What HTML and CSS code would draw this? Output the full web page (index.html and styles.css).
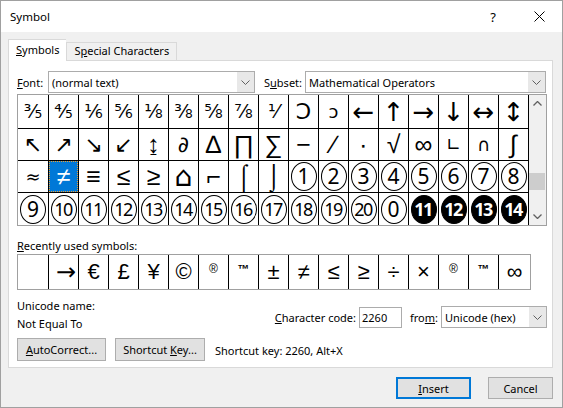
FILE: index.html
```html
<!DOCTYPE html>
<html lang="en">
<head>
  <meta charset="UTF-8">
  <meta name="viewport" content="width=device-width, initial-scale=1.0">
  <title>Symbol</title>
  <link rel="stylesheet" href="styles.css">
</head>
<body>
  <div class="window">
    <div class="titlebar">
      <span class="title">Symbol</span>
      <span class="caption-btn help">?</span>
      <span class="caption-btn">
        <svg width="11" height="11" viewBox="0 0 11 11"><path d="M0.5 0.5 L10.5 10.5 M10.5 0.5 L0.5 10.5" stroke="#000" stroke-width="1" fill="none"/></svg>
      </span>
    </div>

    <div class="tabs">
      <div class="tab active"><u>S</u>ymbols</div>
      <div class="tab">S<u>p</u>ecial Characters</div>
    </div>

    <div class="panel">
      <div class="font-row">
        <span class="lbl font-lbl"><u>F</u>ont:</span>
        <div class="combo font-combo">
          <span class="combo-text">(normal text)</span>
          <span class="drop"><svg width="9" height="5" viewBox="0 0 9 5"><path d="M0.5 0.5 L4.5 4.5 L8.5 0.5" stroke="#606060" fill="none"/></svg></span>
        </div>
        <span class="lbl subset-lbl">S<u>u</u>bset:</span>
        <div class="combo subset-combo">
          <span class="combo-text">Mathematical Operators</span>
          <span class="drop"><svg width="9" height="5" viewBox="0 0 9 5"><path d="M0.5 0.5 L4.5 4.5 L8.5 0.5" stroke="#606060" fill="none"/></svg></span>
        </div>
      </div>

      <div class="charmap">
        <div class="cells">
          <div class="cell frac">⅗</div>
          <div class="cell frac">⅘</div>
          <div class="cell frac">⅙</div>
          <div class="cell frac">⅚</div>
          <div class="cell frac">⅛</div>
          <div class="cell frac">⅜</div>
          <div class="cell frac">⅝</div>
          <div class="cell frac">⅞</div>
          <div class="cell frac">⅟</div>
          <div class="cell">Ↄ</div>
          <div class="cell small">ↄ</div>
          <div class="cell arrow">←</div>
          <div class="cell arrow">↑</div>
          <div class="cell arrow">→</div>
          <div class="cell arrow">↓</div>
          <div class="cell arrow">↔</div>
          <div class="cell arrow">↕</div>

          <div class="cell">↖</div>
          <div class="cell">↗</div>
          <div class="cell">↘</div>
          <div class="cell">↙</div>
          <div class="cell math">↨</div>
          <div class="cell">∂</div>
          <div class="cell math">∆</div>
          <div class="cell math">∏</div>
          <div class="cell math">∑</div>
          <div class="cell math">−</div>
          <div class="cell math">∕</div>
          <div class="cell math">∙</div>
          <div class="cell math">√</div>
          <div class="cell math">∞</div>
          <div class="cell small">∟</div>
          <div class="cell small">∩</div>
          <div class="cell math">∫</div>

          <div class="cell small">≈</div>
          <div class="cell selected">≠</div>
          <div class="cell math">≡</div>
          <div class="cell math">≤</div>
          <div class="cell math">≥</div>
          <div class="cell house">⌂</div>
          <div class="cell math">⌐</div>
          <div class="cell tall">⌠</div>
          <div class="cell tall">⌡</div>
          <div class="cell"><span class="circ">1</span></div>
          <div class="cell"><span class="circ">2</span></div>
          <div class="cell"><span class="circ">3</span></div>
          <div class="cell"><span class="circ">4</span></div>
          <div class="cell"><span class="circ">5</span></div>
          <div class="cell"><span class="circ">6</span></div>
          <div class="cell"><span class="circ">7</span></div>
          <div class="cell"><span class="circ">8</span></div>

          <div class="cell"><span class="circ">9</span></div>
          <div class="cell"><span class="circ two">10</span></div>
          <div class="cell"><span class="circ two">11</span></div>
          <div class="cell"><span class="circ two">12</span></div>
          <div class="cell"><span class="circ two">13</span></div>
          <div class="cell"><span class="circ two">14</span></div>
          <div class="cell"><span class="circ two">15</span></div>
          <div class="cell"><span class="circ two">16</span></div>
          <div class="cell"><span class="circ two">17</span></div>
          <div class="cell"><span class="circ two">18</span></div>
          <div class="cell"><span class="circ two">19</span></div>
          <div class="cell"><span class="circ two">20</span></div>
          <div class="cell"><span class="circ">0</span></div>
          <div class="cell"><span class="circ two neg">11</span></div>
          <div class="cell"><span class="circ two neg">12</span></div>
          <div class="cell"><span class="circ two neg">13</span></div>
          <div class="cell"><span class="circ two neg">14</span></div>
        </div>
        <div class="scrollbar">
          <div class="sb-btn"><svg width="9" height="5" viewBox="0 0 9 5"><path d="M0.5 4.5 L4.5 0.5 L8.5 4.5" stroke="#606060" stroke-width="1.3" fill="none"/></svg></div>
          <div class="sb-track"><div class="sb-thumb"></div></div>
          <div class="sb-btn"><svg width="9" height="5" viewBox="0 0 9 5"><path d="M0.5 0.5 L4.5 4.5 L8.5 0.5" stroke="#606060" stroke-width="1.3" fill="none"/></svg></div>
        </div>
      </div>

      <div class="recent-lbl"><u>R</u>ecently used symbols:</div>
      <div class="recent">
        <div class="rcell"></div>
        <div class="rcell long">→</div>
        <div class="rcell">€</div>
        <div class="rcell">£</div>
        <div class="rcell">¥</div>
        <div class="rcell">©</div>
        <div class="rcell sup">®</div>
        <div class="rcell sup tm">™</div>
        <div class="rcell">±</div>
        <div class="rcell">≠</div>
        <div class="rcell">≤</div>
        <div class="rcell">≥</div>
        <div class="rcell">÷</div>
        <div class="rcell">×</div>
        <div class="rcell sup">®</div>
        <div class="rcell sup tm">™</div>
        <div class="rcell">∞</div>
      </div>

      <div class="info">
        <div class="uname">
          <div>Unicode name:</div>
          <div>Not Equal To</div>
        </div>
        <div class="code-row">
          <span class="lbl"><u>C</u>haracter code:</span>
          <div class="field code-field">2260</div>
          <span class="lbl from-lbl">fro<u>m</u>:</span>
          <div class="combo from-combo">
            <span class="combo-text">Unicode (hex)</span>
            <span class="drop"><svg width="9" height="5" viewBox="0 0 9 5"><path d="M0.5 0.5 L4.5 4.5 L8.5 0.5" stroke="#606060" fill="none"/></svg></span>
          </div>
        </div>
      </div>

      <div class="btn-row">
        <button class="btn autocorrect"><u>A</u>utoCorrect...</button>
        <button class="btn shortcut">Shortcut <u>K</u>ey...</button>
        <span class="shortcut-text">Shortcut key: 2260, Alt+X</span>
      </div>
    </div>

    <div class="actions">
      <button class="btn insert"><u>I</u>nsert</button>
      <button class="btn cancel">Cancel</button>
    </div>
  </div>
</body>
</html>
```

FILE: styles.css
```css
* {
  box-sizing: border-box;
}

body {
  margin: 0;
  font-family: 'Noto Sans', 'Open Sans', sans-serif;
  font-size: 11px;
  color: #000;
}

.window {
  width: 563px;
  height: 408px;
  border: 1px solid #a0a0a0;
  background: #f0f0f0;
  display: flex;
  flex-direction: column;
}

/* title bar */
.titlebar {
  height: 31px;
  background: #fff;
  display: flex;
  align-items: center;
  padding-left: 9px;
}

.title {
  flex: 1;
  font-size: 11.5px;
}

.caption-btn {
  width: 46px;
  height: 31px;
  display: flex;
  align-items: center;
  justify-content: center;
}

.help {
  font-size: 13px;
}

/* tabs */
.tabs {
  display: flex;
  align-items: flex-end;
  margin-top: 6px;
  padding-left: 7px;
  height: 22px;
}

.tab {
  height: 18px;
  padding: 0 7px;
  border: 1px solid #d9d9d9;
  border-bottom: none;
  background: #f0f0f0;
  line-height: 16px;
}

.tab.active {
  height: 22px;
  background: #fff;
  padding-top: 2px;
  margin-bottom: -1px;
  position: relative;
  z-index: 1;
  border-right: none;
}

/* tab page */
.panel {
  height: 308px;
  margin: 0 9px 0 7px;
  border: 1px solid #d9d9d9;
  background: #fff;
  padding: 10px 0 0 8px;
}

.font-row {
  display: flex;
  align-items: center;
  height: 22px;
  margin-bottom: 1px;
}

.lbl {
  white-space: nowrap;
}

.font-lbl {
  width: 31px;
}

.subset-lbl {
  width: 41px;
  margin-left: 9px;
}

.combo {
  height: 22px;
  border: 1px solid #acacac;
  display: flex;
  align-items: center;
  background: #fff;
}

.combo-text {
  flex: 1;
  padding-left: 3px;
  white-space: nowrap;
}

.drop {
  width: 17px;
  height: 100%;
  background: #e8e8e8;
  display: flex;
  align-items: center;
  justify-content: center;
}

.font-combo {
  width: 207px;
}

.subset-combo {
  width: 241px;
}

/* character grid */
.charmap {
  display: flex;
  width: 530px;
  border: 1px solid #a0a0a0;
}

.cells {
  display: grid;
  grid-template-columns: 30px repeat(16, 29px);
  grid-template-rows: 33px 31px 31px 32px;
  gap: 1px;
  background: #000;
  border-right: 1px solid #000;
  font-family: 'DejaVu Sans', sans-serif;
}

.cell {
  background: #fff;
  display: flex;
  align-items: center;
  justify-content: center;
  font-size: 22px;
  line-height: 1;
  overflow: hidden;
}

.cell.frac {
  font-size: 19px;
}

.cell.arrow {
  font-size: 26px;
}

.cell.math {
  font-family: 'Liberation Sans', 'DejaVu Sans', sans-serif;
  font-size: 25px;
}

.cell.small {
  font-size: 18px;
}

.cell.house {
  font-size: 28px;
}

.cell.tall {
  font-family: 'Liberation Sans', 'DejaVu Sans', sans-serif;
  font-size: 25px;
}

.cell.selected {
  background: #0078d7;
  color: #fff;
  border: 1px dotted #f0a030;
  font-family: 'Liberation Sans', 'DejaVu Sans', sans-serif;
  font-size: 25px;
}

.circ {
  width: 26px;
  height: 29px;
  border: 1.5px solid #000;
  border-radius: 50%;
  display: flex;
  align-items: center;
  justify-content: center;
  font-family: 'Noto Sans', sans-serif;
  font-size: 21px;
}

.circ.two {
  font-size: 18px;
  letter-spacing: -1.5px;
  padding-right: 1px;
}

.circ.neg {
  background: #000;
  color: #fff;
  font-weight: bold;
}

.scrollbar {
  width: 17px;
  display: flex;
  flex-direction: column;
  background: #f0f0f0;
}

.sb-btn {
  height: 17px;
  display: flex;
  align-items: center;
  justify-content: center;
}

.sb-track {
  flex: 1;
}

.sb-thumb {
  height: 17px;
  margin-top: 61px;
  margin-right: 1px;
  background: #cdcdcd;
}

/* recently used */
.recent-lbl {
  margin-top: 12px;
  line-height: 16px;
}

.recent {
  display: grid;
  grid-template-columns: 30px repeat(15, 29px) 31px;
  grid-template-rows: 34px;
  gap: 1px;
  width: 514px;
  background: #000;
  border: 1px solid #a0a0a0;
  font-family: 'Liberation Sans', Arial, sans-serif;
}

.rcell {
  background: #fff;
  display: flex;
  align-items: center;
  justify-content: center;
  font-size: 22px;
}

.rcell.long {
  font-family: 'DejaVu Sans', sans-serif;
  font-size: 24px;
  justify-content: flex-end;
  padding-right: 2px;
}

.rcell.sup {
  font-size: 12px;
  align-items: flex-start;
  padding-top: 7px;
}

.rcell.tm {
  font-weight: bold;
}

/* info */
.info {
  display: flex;
  justify-content: space-between;
  margin-top: 7px;
  width: 530px;
}

.uname div {
  line-height: 18px;
}

.code-row {
  display: flex;
  align-items: center;
  margin-top: 9px;
  height: 22px;
}

.code-field {
  width: 43px;
  height: 21px;
  margin-left: 3px;
  border: 1px solid #acacac;
  padding-left: 2px;
  line-height: 19px;
}

.from-lbl {
  margin-left: 8px;
  width: 31px;
}

.from-combo {
  width: 106px;
}

.btn-row {
  display: flex;
  align-items: center;
  margin-top: 5px;
}

.btn {
  height: 23px;
  border: 1px solid #adadad;
  background: #e1e1e1;
  font-family: inherit;
  font-size: 11px;
  color: #000;
  padding: 0;
}

.autocorrect {
  width: 89px;
}

.shortcut {
  width: 90px;
  margin-left: 9px;
}

.shortcut-text {
  margin-left: 10px;
  padding-top: 2px;
}

/* dialog buttons */
.actions {
  display: flex;
  justify-content: flex-end;
  margin-top: 9px;
  padding-right: 9px;
}

.actions .btn {
  height: 22px;
}

.insert {
  width: 75px;
  border: 2px solid #0078d7;
}

.cancel {
  width: 65px;
  margin-left: 17px;
}
```
